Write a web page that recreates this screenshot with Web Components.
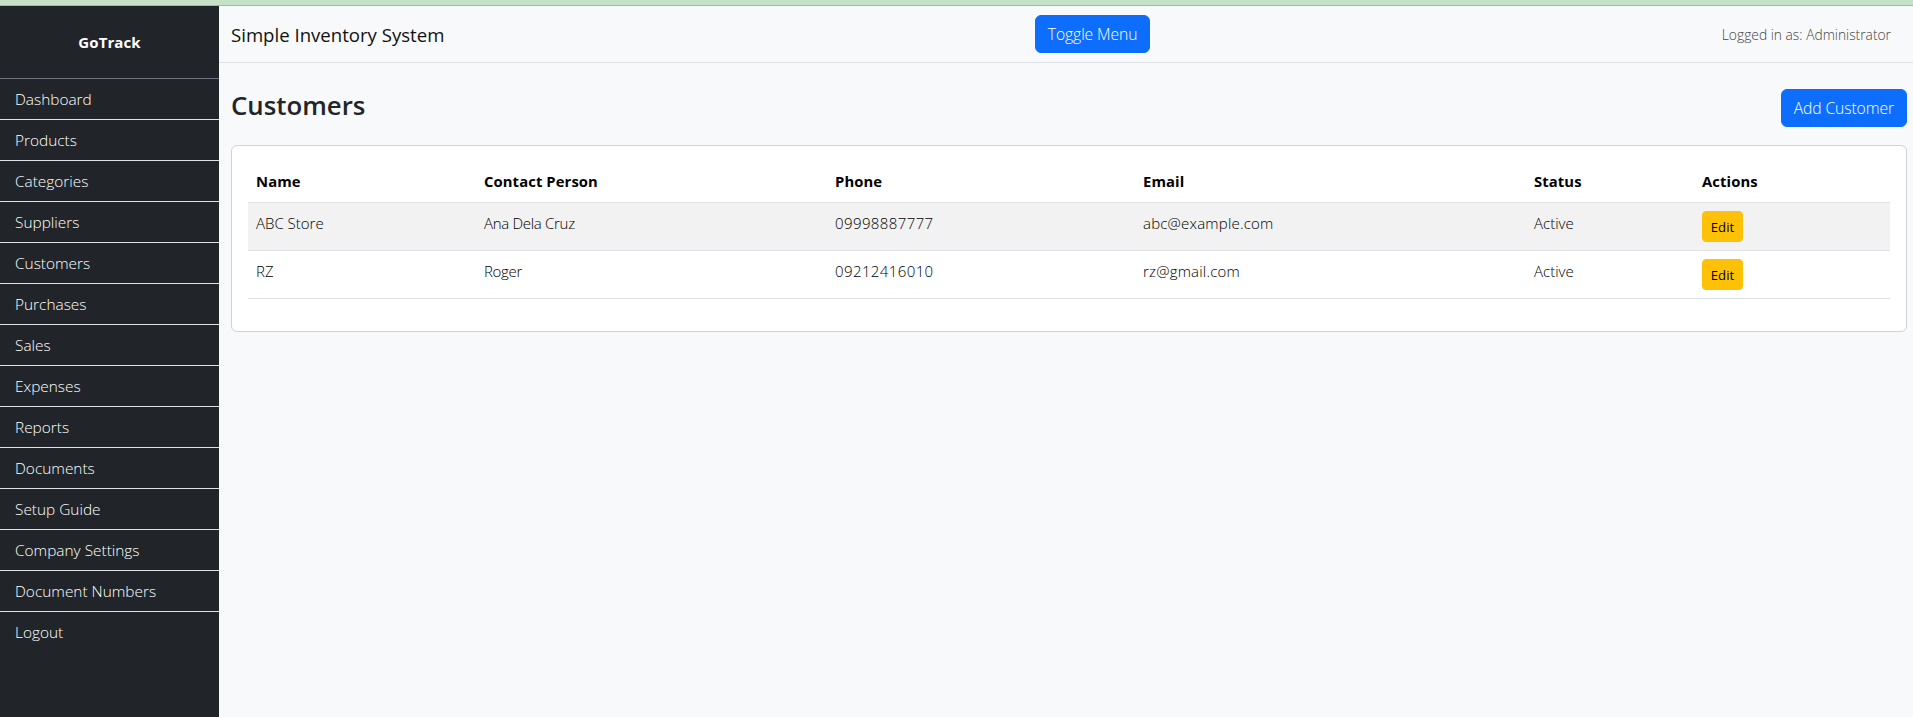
<!DOCTYPE html>
<html>
<head>
<meta charset="utf-8">
<title>Customers</title>
<style>
    html, body { margin: 0; height: 100%; }
    body {
        display: flex;
        flex-direction: column;
        overflow: hidden;
        font-family: "Open Sans", "Liberation Sans", sans-serif;
        color: #212529;
        background-color: #f8f9fa;
    }
</style>
</head>
<body>
<gt-strip></gt-strip>
<gt-layout>
    <gt-sidebar slot="side" brand="GoTrack">
        <gt-nav-link>Dashboard</gt-nav-link>
        <gt-nav-link>Products</gt-nav-link>
        <gt-nav-link>Categories</gt-nav-link>
        <gt-nav-link>Suppliers</gt-nav-link>
        <gt-nav-link>Customers</gt-nav-link>
        <gt-nav-link>Purchases</gt-nav-link>
        <gt-nav-link>Sales</gt-nav-link>
        <gt-nav-link>Expenses</gt-nav-link>
        <gt-nav-link>Reports</gt-nav-link>
        <gt-nav-link>Documents</gt-nav-link>
        <gt-nav-link>Setup Guide</gt-nav-link>
        <gt-nav-link>Company Settings</gt-nav-link>
        <gt-nav-link>Document Numbers</gt-nav-link>
        <gt-nav-link last>Logout</gt-nav-link>
    </gt-sidebar>
    <gt-topbar title="Simple Inventory System" user="Logged in as: Administrator"></gt-topbar>
    <gt-page-head heading="Customers" action="Add Customer"></gt-page-head>
    <gt-card>
        <gt-customers></gt-customers>
    </gt-card>
</gt-layout>

<script>
const btnStyle = `
    button {
        display: block;
        font: inherit;
        font-size: 15.7px;
        font-weight: 300;
        letter-spacing: -0.1px;
        color: #fff;
        background-color: #0d6efd;
        border: 1px solid #0d6efd;
        border-radius: 6px;
        height: 38px;
        padding: 0 12px;
    }
`;

class GtStrip extends HTMLElement {
    constructor() {
        super();
        this.attachShadow({ mode: 'open' });
        this.shadowRoot.innerHTML = `<style>
            :host { display: block; height: 5px; background-color: #c5e1c6; border-bottom: 1px solid #9dbb9f; flex: none; }
        </style>`;
    }
}

class GtLayout extends HTMLElement {
    constructor() {
        super();
        this.attachShadow({ mode: 'open' });
        this.shadowRoot.innerHTML = `<style>
            :host { display: flex; flex: 1; min-height: 0; }
            .main { flex: 1; min-width: 0; display: flex; flex-direction: column; }
        </style>
        <slot name="side"></slot>
        <div class="main"><slot></slot></div>`;
    }
}

class GtSidebar extends HTMLElement {
    constructor() {
        super();
        this.attachShadow({ mode: 'open' });
        this.shadowRoot.innerHTML = `<style>
            :host { display: block; flex: none; width: 219px; background-color: #212529; color: #fff; }
            .brand {
                height: 72px;
                border-bottom: 1px solid #6c757d;
                display: flex;
                align-items: center;
                justify-content: center;
                font-size: 15px;
                font-weight: 700;
                letter-spacing: 0.1px;
            }
        </style>
        <div class="brand"></div>
        <slot></slot>`;
        this.shadowRoot.querySelector(".brand").textContent = this.getAttribute('brand');
    }
}

class GtNavLink extends HTMLElement {
    constructor() {
        super();
        this.attachShadow({ mode: 'open' });
        this.shadowRoot.innerHTML = `<style>
            :host {
                display: flex;
                align-items: center;
                height: 40px;
                padding: 0 15px;
                font-size: 15.4px;
                font-weight: 300;
                border-bottom: 1px solid #dee2e6;
                color: #fff;
            }
            :host([last]) { border-bottom: 0; }
        </style>
        <slot></slot>`;
    }
}

class GtTopbar extends HTMLElement {
    constructor() {
        super();
        this.attachShadow({ mode: 'open' });
        this.shadowRoot.innerHTML = `<style>
            ${btnStyle}
            :host {
                display: flex;
                justify-content: space-between;
                align-items: center;
                height: 56px;
                padding: 0 22px 0 12px;
                border-bottom: 1px solid #dee2e6;
                flex: none;
            }
            .title { font-size: 18.6px; color: #111; margin-right: 19px; }
            .user { font-size: 13.8px; color: #444; font-weight: 300; }
        </style>
        <div class="title"></div>
        <button>Toggle Menu</button>
        <div class="user"></div>`;
        this.shadowRoot.querySelector(".title").textContent = this.getAttribute('title');
        this.shadowRoot.querySelector(".user").textContent = this.getAttribute('user');
    }
}

class GtPageHead extends HTMLElement {
    constructor() {
        super();
        this.attachShadow({ mode: 'open' });
        this.shadowRoot.innerHTML = `<style>
            ${btnStyle}
            :host {
                display: flex;
                justify-content: space-between;
                align-items: center;
                margin: 26px 6px 18px 12px;
                flex: none;
            }
            h3 { margin: 0 0 6px; line-height: 32px; font-size: 25.8px; font-weight: 600; }
        </style>
        <h3></h3>
        <button></button>`;
        this.shadowRoot.querySelector("h3").textContent = this.getAttribute('heading');
        this.shadowRoot.querySelector("button").textContent = this.getAttribute('action');
    }
}

class GtCard extends HTMLElement {
    constructor() {
        super();
        this.attachShadow({ mode: 'open' });
        this.shadowRoot.innerHTML = `<style>
            :host {
                display: block;
                margin: 0 6px 0 12px;
                padding: 16px 16px 32px;
                background-color: #fff;
                border: 1px solid #d0d2d4;
                border-radius: 6px;
            }
        </style>
        <slot></slot>`;
    }
}

const customers = [
    { name: "ABC Store", contact: "Ana Dela Cruz", phone: "09998887777", email: "abc@example.com", status: "Active" },
    { name: "RZ", contact: "Roger", phone: "09212416010", email: "rz@gmail.com", status: "Active" },
];

class GtCustomers extends HTMLElement {
    constructor() {
        super();
        this.attachShadow({ mode: 'open' });
        const rows = customers.map(c => `
            <tr>
                <td>${c.name}</td>
                <td class="contact">${c.contact}</td>
                <td class="phone">${c.phone}</td>
                <td class="email">${c.email}</td>
                <td>${c.status}</td>
                <td><button>Edit</button></td>
            </tr>`).join("");
        this.shadowRoot.innerHTML = `<style>
            :host { display: block; font-size: 15px; color: #000; }
            table { width: 100%; table-layout: fixed; border-collapse: collapse; }
            th, td { padding: 8px; line-height: 24px; text-align: left; vertical-align: top; border-bottom: 1px solid #dee2e6; }
            th { padding-top: 7px; padding-bottom: 9px; font-weight: 700; font-size: 14.8px; letter-spacing: 0.1px; }
            td { font-weight: 300; }
            .contact { letter-spacing: -0.3px; }
            .phone { letter-spacing: 0.4px; }
            .email { letter-spacing: 0.2px; }
            tbody tr:nth-child(odd) td { background-color: #f2f2f2; }
            button {
                display: block;
                font: inherit;
                font-size: 13.2px;
                font-weight: 400;
                color: #000;
                background-color: #ffc107;
                border: 1px solid #ffc107;
                border-radius: 4px;
                height: 31px;
                width: 41px;
                padding: 0;
            }
        </style>
        <table>
            <colgroup>
                <col style="width:228px"><col style="width:351px"><col style="width:308px">
                <col style="width:391px"><col style="width:168px"><col style="width:196px">
            </colgroup>
            <thead><tr>
                <th>Name</th><th>Contact Person</th><th>Phone</th><th>Email</th><th>Status</th><th>Actions</th>
            </tr></thead>
            <tbody>${rows}</tbody>
        </table>`;
    }
}

customElements.define("gt-strip", GtStrip);
customElements.define("gt-layout", GtLayout);
customElements.define("gt-sidebar", GtSidebar);
customElements.define("gt-nav-link", GtNavLink);
customElements.define("gt-topbar", GtTopbar);
customElements.define("gt-page-head", GtPageHead);
customElements.define("gt-card", GtCard);
customElements.define("gt-customers", GtCustomers);
</script>
</body>
</html>
